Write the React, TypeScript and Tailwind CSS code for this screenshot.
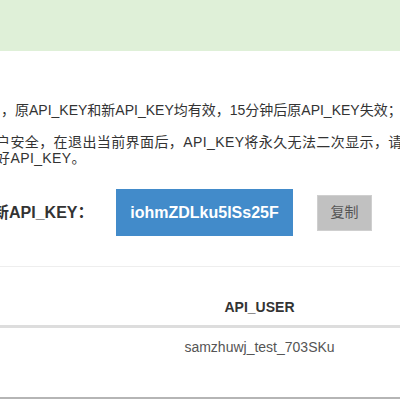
export default function App() {
  const font = { fontFamily: '"Liberation Sans", "Noto Sans CJK SC", Arial, sans-serif' };

  return (
    <div className="w-[400px] h-[400px] overflow-hidden bg-white text-[#333]" style={font}>
      {/* success banner */}
      <div className="h-[51px] bg-[#dff0d8]" />

      {/* notes */}
      <div className="mt-[51px] text-[14px] leading-[16px] whitespace-nowrap">
        <p className="ml-[1px]">，原API_KEY和新API_KEY均有效，15分钟后原API_KEY失效；</p>
        <div className="mt-[16px] -ml-[4px] tracking-[0.4px]">
          <p>户安全，在退出当前界面后，API_KEY将永久无法二次显示，请妥善保存</p>
          <p>好API_KEY。</p>
        </div>
      </div>

      {/* new key row */}
      <div className="mt-[23px] flex items-center -ml-[7px]">
        <span className="w-[123px] shrink-0 text-[16px] font-bold whitespace-nowrap">新API_KEY：</span>
        <div className="w-[177px] h-[47px] flex items-center justify-center bg-[#428bca] text-white text-[16px] font-bold">
          iohmZDLku5lSs25F
        </div>
        <button className="ml-[24px] w-[55px] h-[36px] bg-[#c1c1c1] border border-[#cfcfcf] text-[14px] text-[#555]">
          复制
        </button>
      </div>

      {/* table */}
      <div className="mt-[30px] border-t border-[#eeeeee]">
        <div className="grid grid-cols-[119px_1fr] border-b-[3px] border-[#dddddd] pt-[32px] pb-[10px] text-[14px] leading-[16px] font-bold">
          <div />
          <div className="text-center">API_USER</div>
        </div>
        <div className="grid grid-cols-[119px_1fr] h-[71px] pt-[11px] text-[14px] leading-[16px] text-[#555] border-b-2 border-[#b5b5b5]">
          <div />
          <div className="text-center">samzhuwj_test_703SKu</div>
        </div>
      </div>
    </div>
  );
}
